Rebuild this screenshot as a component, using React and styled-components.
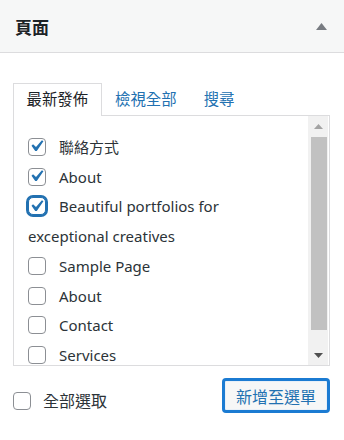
import styled, { createGlobalStyle } from "styled-components";

const GlobalStyle = createGlobalStyle`
  body {
    margin: 0;
    background: #fff;
    font-family: "Noto Sans", "Noto Sans CJK TC", sans-serif;
    color: #2c3338;
  }
`

const pages = [
  { id: 1, title: "聯絡方式", checked: true },
  { id: 2, title: "About", checked: true },
  { id: 3, title: "Beautiful portfolios for exceptional creatives", checked: true, focus: true },
  { id: 4, title: "Sample Page" },
  { id: 5, title: "About" },
  { id: 6, title: "Contact" },
  { id: 7, title: "Services" },
]

const Box = styled.div`
  width: 344px;
  height: 440px;
  overflow: hidden;
`

const Header = styled.div`
  height: 52px;
  display: flex;
  align-items: center;
  justify-content: space-between;
  padding: 0 17px 0 15px;
  background: #f6f7f7;
  border-bottom: 1px solid #dcdcde;
`

const Title = styled.h2`
  margin: 0;
  font-size: 17px;
  font-weight: 600;
  color: #1d2327;
`

const Body = styled.div`
  padding: 30px 14px 0 13px;
`

const Tabs = styled.div`
  display: flex;
  height: 32px;
  border-bottom: 1px solid #dcdcde;
`

const Tab = styled.div`
  padding: 0 12.5px;
  line-height: 31px;
  font-size: 15.4px;
  border: 1px solid ${(p) => (p.$active ? "#dcdcde" : "transparent")};
  border-bottom: none;
  background: ${(p) => (p.$active ? "#fff" : "transparent")};
  color: ${(p) => (p.$active ? "#1d2327" : "#2271b1")};
  height: ${(p) => (p.$active ? "33px" : "32px")};
  box-sizing: border-box;
`

const Panel = styled.div`
  display: flex;
  height: 249px;
  border: 1px solid #dcdcde;
  border-top: none;
`

const List = styled.ul`
  flex: 1;
  margin: 0;
  padding: 17px 6px 0 14px;
  list-style: none;
  overflow: hidden;
`

const Row = styled.li`
  font-size: 15px;
  line-height: 29.7px;
  color: #2c3338;
`

const Check = styled.span`
  display: inline-flex;
  align-items: center;
  justify-content: center;
  box-sizing: border-box;
  width: 18px;
  height: 18px;
  margin-right: 13px;
  vertical-align: middle;
  position: relative;
  top: -2px;
  border: 1px solid ${(p) => (p.$focus ? "#2271b1" : "#8c8f94")};
  border-radius: ${(p) => (p.$focus ? "5px" : "4px")};
  background: #fff;
  box-shadow: ${(p) => (p.$focus ? "0 0 0 2px #2271b1" : "none")};
`

const ScrollBar = styled.div`
  width: 20px;
  margin-right: 1px;
  display: flex;
  flex-direction: column;
  background: #f1f1f1;
`

const ScrollButton = styled.div`
  height: 20px;
  display: flex;
  align-items: center;
  justify-content: center;
`

const Track = styled.div`
  flex: 1;
  padding: 1px 1px 0 3px;
`

const Thumb = styled.div`
  height: 193px;
  background: #c1c1c1;
`

const Footer = styled.div`
  display: flex;
  justify-content: space-between;
  align-items: flex-start;
  margin-top: 12px;
`

const SelectAll = styled.label`
  margin-top: 8px;
  font-size: 16px;
  line-height: 30px;
  color: #2c3338;
  display: flex;
  align-items: center;
`

const AddButton = styled.button`
  width: 108px;
  height: 35px;
  padding: 0;
  font-family: inherit;
  font-size: 16px;
  color: #2271b1;
  background: #f6f7f7;
  border: 3px solid #1b7bd2;
  border-radius: 4px;
  box-shadow: inset 0 0 0 1px #e8f0f8;
`

const CheckMark = () => (
  <svg width="23" height="23" viewBox="1 0.3 20 20" style={{ margin: "-3px", flex: "none" }}>
    <path d="M14.83 4.89l1.34.94-5.81 8.38H9.02L5.78 9.67l1.34-1.25 2.57 2.4z" fill="#2271b1" />
  </svg>
)

const Arrow = ({ up, color }) => (
  <svg width="9" height="5" viewBox="0 0 9 5">
    <path d={up ? "M0 5L4.5 0L9 5z" : "M0 0L4.5 5L9 0z"} fill={color} />
  </svg>
)

const App = () => {
  return (
    <Box>
      <GlobalStyle />
      <Header>
        <Title>頁面</Title>
        <svg width="11" height="7" viewBox="0 0 11 7">
          <path d="M0 7L5.5 0L11 7z" fill="#787c82" />
        </svg>
      </Header>
      <Body>
        <Tabs>
          <Tab $active>最新發佈</Tab>
          <Tab>檢視全部</Tab>
          <Tab>搜尋</Tab>
        </Tabs>
        <Panel>
          <List>
            {pages.map((page) => (
              <Row key={page.id}>
                <Check $focus={page.focus}>{page.checked && <CheckMark />}</Check>
                {page.title}
              </Row>
            ))}
          </List>
          <ScrollBar>
            <ScrollButton><Arrow up color="#a3a3a3" /></ScrollButton>
            <Track><Thumb /></Track>
            <ScrollButton><Arrow color="#505050" /></ScrollButton>
          </ScrollBar>
        </Panel>
        <Footer>
          <SelectAll>
            <Check style={{ top: 0, marginRight: 12 }} />
            全部選取
          </SelectAll>
          <AddButton>新增至選單</AddButton>
        </Footer>
      </Body>
    </Box>
  )
}

export default App;
